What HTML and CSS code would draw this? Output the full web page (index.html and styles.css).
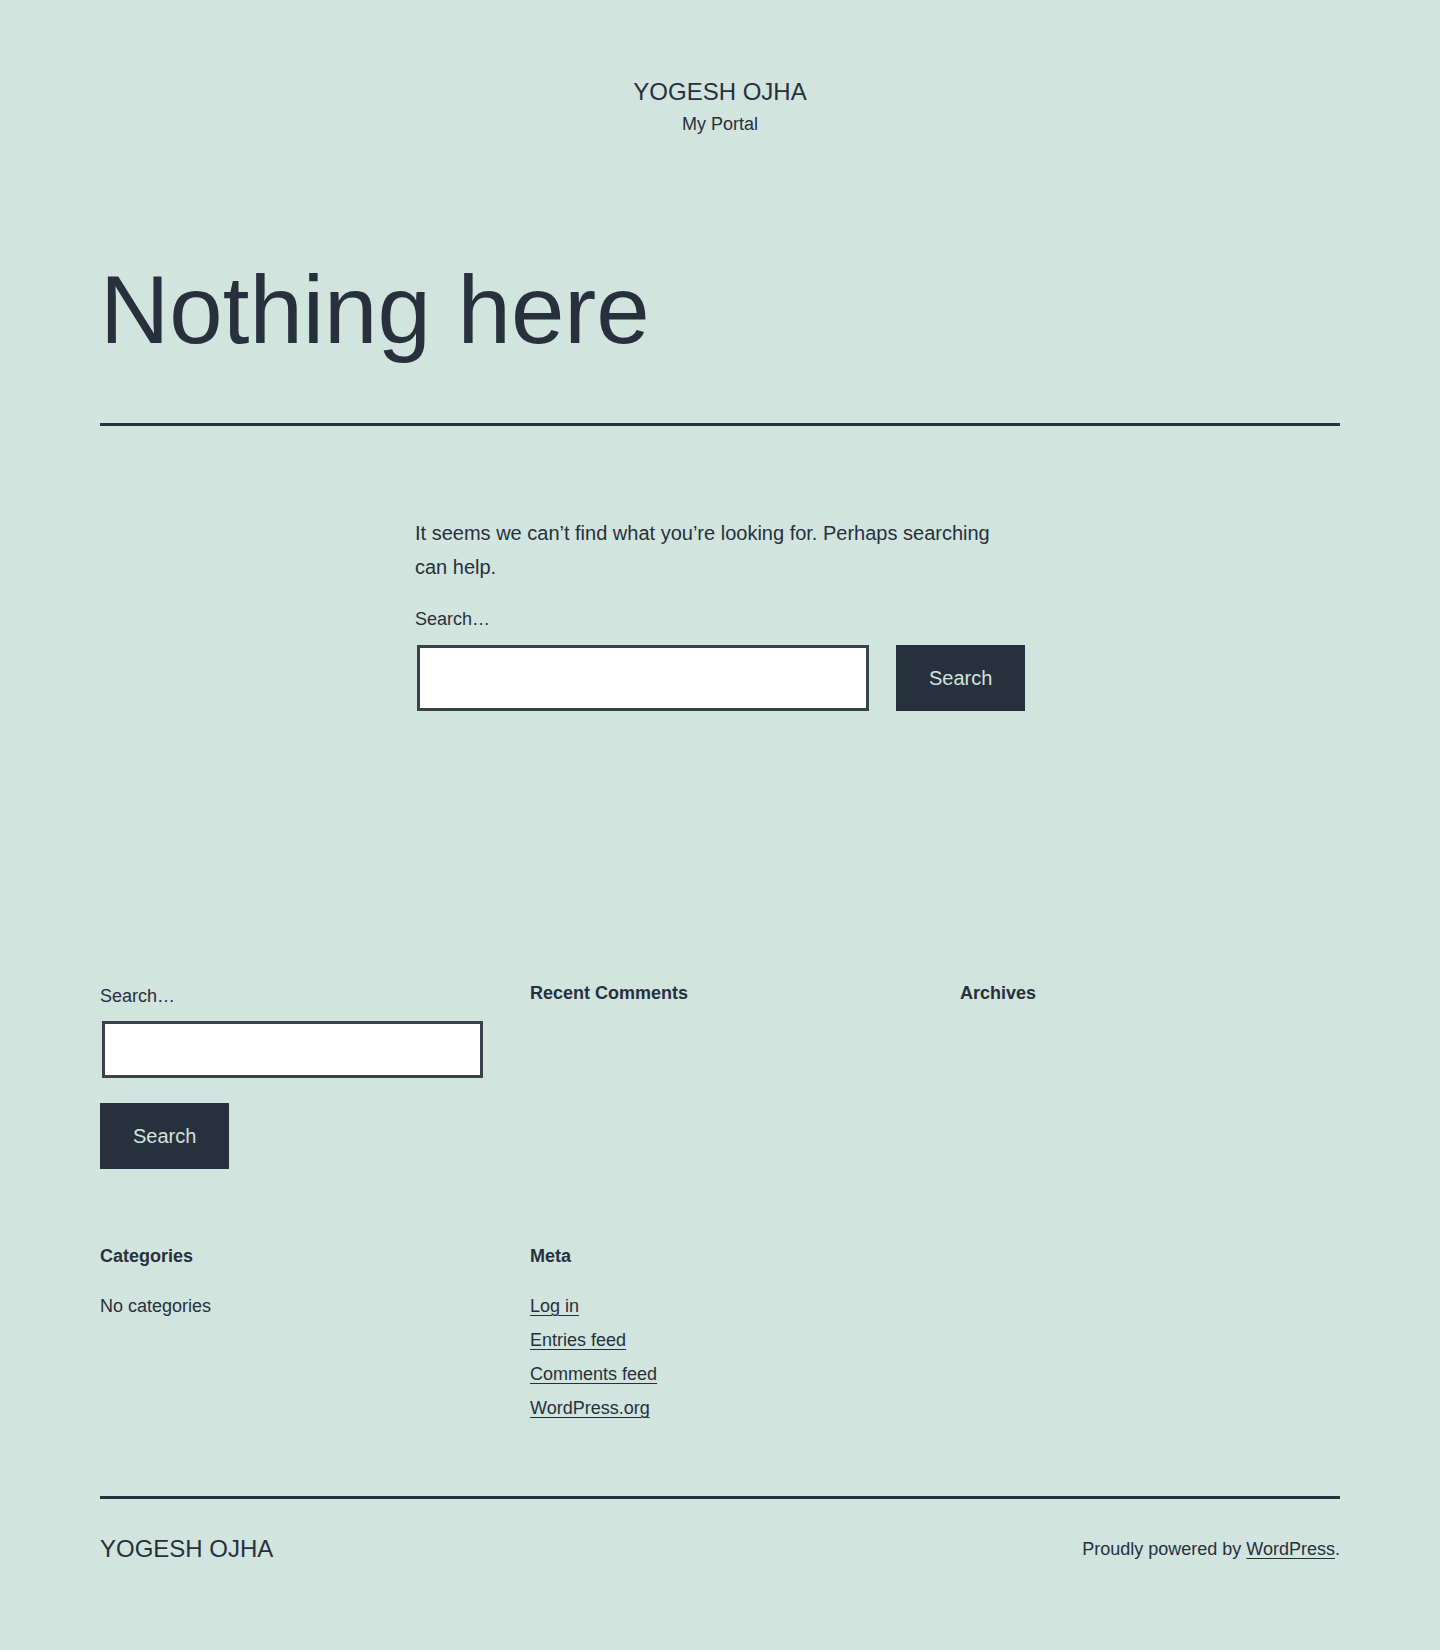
FILE: index.html
```html
<!DOCTYPE html>
<html lang="en">
<head>
<meta charset="utf-8">
<title>Page not found – YOGESH OJHA</title>
<link rel="stylesheet" href="styles.css">
</head>
<body>
<div class="site">
  <header class="site-header">
    <p class="site-title">YOGESH OJHA</p>
    <p class="site-description">My Portal</p>
  </header>

  <main class="site-main">
    <header class="page-header">
      <h1 class="page-title">Nothing here</h1>
    </header>
    <div class="page-content">
      <p class="intro">It seems we can’t find what you’re looking for. Perhaps searching can help.</p>
      <form class="search-form" onsubmit="return false">
        <label class="search-label" for="s1">Search…</label>
        <div class="search-row">
          <input class="search-field" id="s1" type="search">
          <button class="search-submit" type="submit">Search</button>
        </div>
      </form>
    </div>
  </main>

  <aside class="widget-area">
    <section class="widget widget-search">
      <label class="search-label" for="s2">Search…</label>
      <input class="search-field widget-field" id="s2" type="search">
      <button class="search-submit widget-submit" type="button">Search</button>
    </section>
    <section class="widget">
      <h2 class="widget-title">Recent Comments</h2>
    </section>
    <section class="widget">
      <h2 class="widget-title">Archives</h2>
    </section>
    <section class="widget">
      <h2 class="widget-title">Categories</h2>
      <ul class="widget-list">
        <li>No categories</li>
      </ul>
    </section>
    <section class="widget">
      <h2 class="widget-title">Meta</h2>
      <ul class="widget-list">
        <li><a href="#">Log in</a></li>
        <li><a href="#">Entries feed</a></li>
        <li><a href="#">Comments feed</a></li>
        <li><a href="#">WordPress.org</a></li>
      </ul>
    </section>
  </aside>

  <footer class="site-footer">
    <div class="site-info">
      <p class="footer-name">YOGESH OJHA</p>
      <p class="powered-by">Proudly powered by <a href="#">WordPress</a>.</p>
    </div>
  </footer>
</div>
</body>
</html>
```

FILE: styles.css
```css
* { box-sizing: border-box; }

html, body {
  margin: 0;
  padding: 0;
  background: #d1e4dd;
}

body {
  color: #28303d;
  font-family: "Liberation Sans", Arial, sans-serif;
  font-size: 20px;
  min-height: 1650px;
}

p, h1, h2, ul { margin: 0; padding: 0; }

a {
  color: #28303d;
  text-decoration: underline;
  text-decoration-thickness: 1px;
  text-underline-offset: 3px;
}

.site {
  width: 1240px;
  margin: 0 auto;
}

/* Header */
.site-header {
  padding-top: 77px;
  text-align: center;
}

.site-title {
  font-size: 24px;
  line-height: 30px;
  text-transform: uppercase;
}

.site-description {
  margin-top: 4px;
  font-size: 18px;
  line-height: 27px;
}

/* Main */
.page-header {
  margin-top: 119px;
  padding-bottom: 60px;
  border-bottom: 3px solid #28303d;
}

.page-title {
  font-size: 96px;
  font-weight: 400;
  line-height: 106px;
}

.page-content {
  width: 610px;
  margin: 90px auto 0;
}

.intro {
  font-size: 20px;
  line-height: 34px;
}

.search-label {
  display: block;
  font-size: 18px;
  line-height: 30px;
}

.search-form .search-label {
  margin-top: 20px;
}

.search-row {
  display: flex;
  gap: 27px;
  margin-top: 11px;
}

.search-field {
  display: block;
  height: 66px;
  width: 452px;
  margin-left: 2px;
  border: 3px solid #39414d;
  background: #fff;
  border-radius: 0;
  padding: 10px;
  font: inherit;
  font-size: 20px;
  color: #28303d;
  outline: none;
}

.search-submit {
  display: block;
  height: 66px;
  width: 129px;
  padding: 15px 30px;
  border: 3px solid #28303d;
  background: #28303d;
  color: #d1e4dd;
  font-family: inherit;
  font-size: 20px;
  line-height: 30px;
  border-radius: 0;
  cursor: pointer;
}

/* Widgets */
.widget-area {
  display: grid;
  grid-template-columns: repeat(3, minmax(0, 1fr));
  column-gap: 50px;
  row-gap: 75px;
  margin-top: 270px;
}

.widget-field {
  width: 381px;
  height: 57px;
  margin-top: 10px;
}

.widget-submit {
  margin-top: 25px;
}

.widget-title {
  font-size: 18px;
  font-weight: 700;
  line-height: 24px;
}

.widget-list {
  list-style: none;
  margin-top: 21px;
  font-size: 18px;
  line-height: 34px;
}

/* Footer */
.site-footer {
  margin-top: 71px;
  border-top: 3px solid #28303d;
}

.site-info {
  display: flex;
  justify-content: space-between;
  align-items: center;
  padding-top: 35px;
}

.footer-name {
  font-size: 24px;
  line-height: 30px;
  text-transform: uppercase;
}

.powered-by {
  font-size: 18px;
  line-height: 30px;
}
```
